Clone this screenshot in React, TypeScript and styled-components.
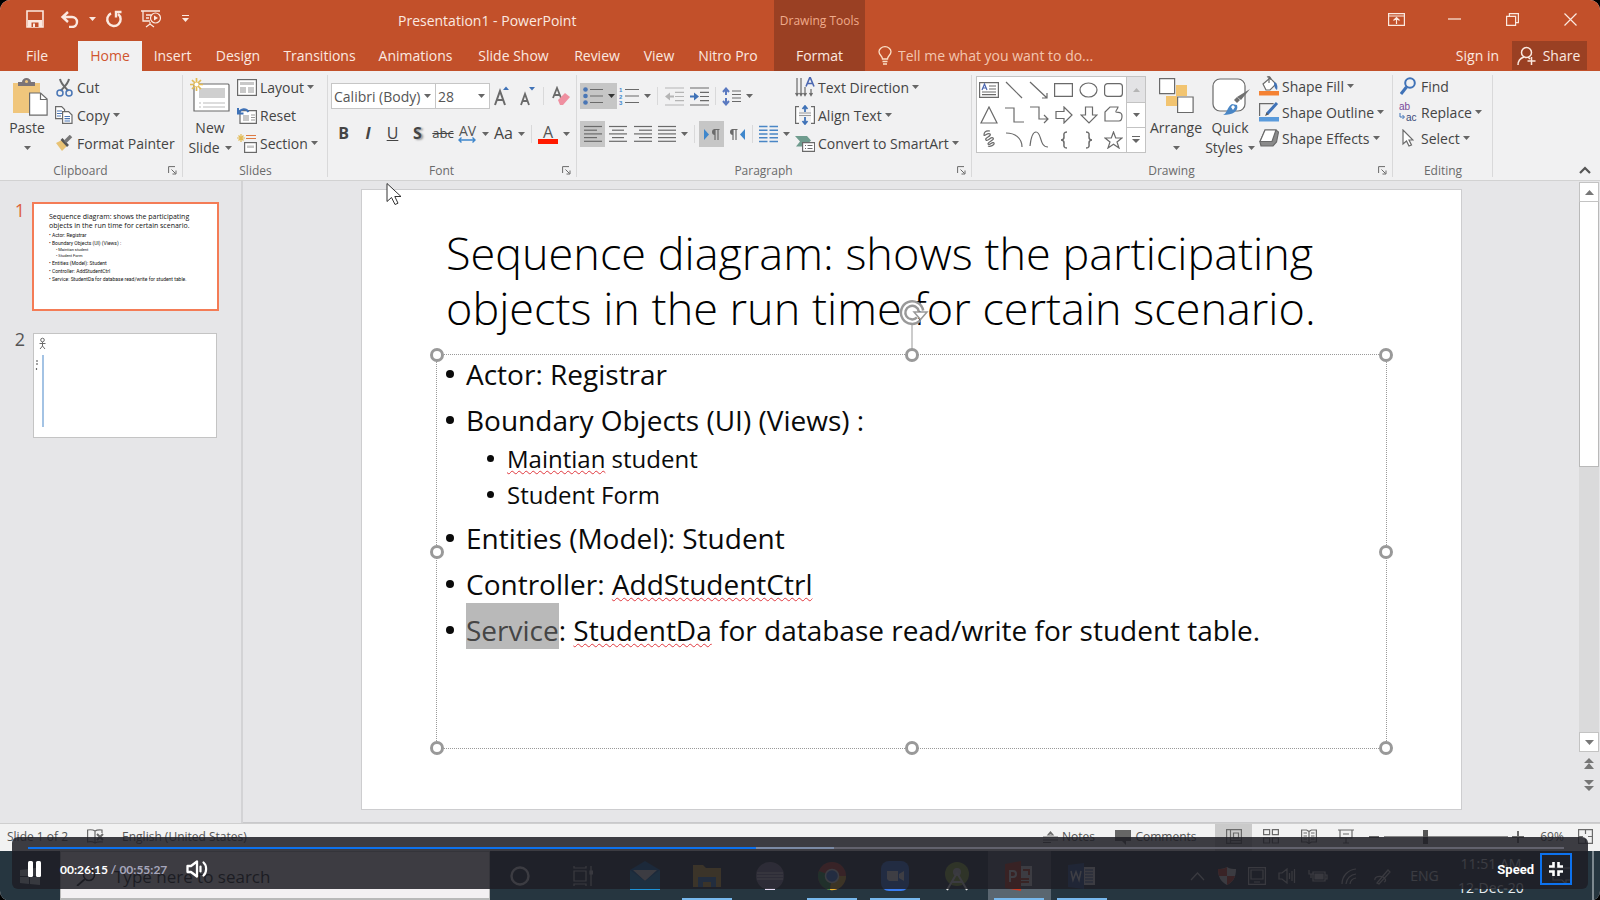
import React from "react";
import styled, { createGlobalStyle, css } from "styled-components";

const GlobalStyle = createGlobalStyle`
  *, *::before, *::after { box-sizing: border-box; }
  html, body { margin: 0; background: #000; }
  body { font-family: "Open Sans", "Noto Sans", sans-serif; font-size: 14px; color: #444; }
  button, input, select { font: inherit; color: inherit; }
  button { background: none; border: 0; padding: 0; cursor: default; }
  h1, p, ul { margin: 0; padding: 0; }
  svg { display: block; flex: none; }
`;

/* ---------- frame ---------- */

const Frame = styled.div`
  position: relative;
  display: flex;
  flex-direction: column;
  min-height: 100vh;
  overflow: hidden;
  border-radius: 10px;
  background: #e6e6e8;
`;

/* ---------- header ---------- */

const Header = styled.header`
  display: flex;
  height: 71px;
  background: #c2502a;
  color: #fbe9e0;
`;

const HeaderSide = styled.div<{ $grow?: boolean }>`
  flex: ${(p) => (p.$grow ? "1" : "none")};
  display: flex;
  flex-direction: column;
`;

const TitleRow = styled.div<{ $end?: boolean }>`
  display: flex;
  align-items: center;
  justify-content: ${(p) => (p.$end ? "flex-end" : "flex-start")};
  height: 41px;
  padding: 0 ${(p) => (p.$end ? 1 : 0)}px 3px 20px;
`;

const QuickButton = styled.button<{ $w: number }>`
  display: flex;
  align-items: center;
  justify-content: center;
  width: ${(p) => p.$w}px;
  height: 36px;
`;

const DocTitle = styled.p`
  padding-top: 3px;
  margin-left: 198px;
  white-space: nowrap;
`;

const TabRow = styled.nav`
  display: flex;
  height: 30px;
`;

const Tab = styled.button<{ $w: number; $active?: boolean }>`
  width: ${(p) => p.$w}px;
  height: 30px;
  padding-bottom: 2px;
  white-space: nowrap;
  ${(p) => p.$active && css`background: #f1f1f2; color: #d0552f;`}
`;

const MainTabs = styled(TabRow)`
  button:first-child, button:last-child { padding-right: 4px; }
`;

const Contextual = styled.div`
  flex: none;
  width: 91px;
  background: #9a4023;
`;

const ContextTitle = styled.div`
  height: 41px;
  line-height: 42px;
  text-align: center;
  font-size: 12px;
  color: #f0ab8b;
`;

const TellMe = styled.label`
  display: flex;
  align-items: center;
  flex: 1;
  gap: 6px;
  padding: 0 0 2px 13px;

  input {
    flex: 1;
    min-width: 0;
    padding: 0;
    border: 0;
    outline: 0;
    background: none;
    &::placeholder { color: #f3c6b0; opacity: 1; }
  }
`;

const SignIn = styled.button`
  padding-bottom: 2px;
  margin-right: 13px;
`;

const Share = styled.button`
  display: flex;
  align-items: center;
  justify-content: center;
  gap: 6px;
  width: 75px;
  height: 29px;
  padding-right: 2px;
  margin-right: 13px;
  background: #9a4023;
`;

/* ---------- ribbon ---------- */

const Ribbon = styled.div`
  display: flex;
  height: 110px;
  background: #f1f1f2;
  border-bottom: 1px solid #d2d2d2;
`;

const Group = styled.section<{ $w: number }>`
  flex: none;
  display: flex;
  flex-direction: column;
  width: ${(p) => p.$w}px;
  background: linear-gradient(#d9d9da, #d9d9da) right 4px / 1px 102px no-repeat;
`;

const GroupBody = styled.div<{ $left?: number }>`
  flex: 1;
  display: flex;
  align-items: flex-start;
  padding-left: ${(p) => p.$left ?? 0}px;
`;

const GroupLabel = styled.div`
  display: flex;
  align-items: center;
  height: 20px;
  font-size: 12px;
  color: #6a6a6a;

  span { flex: 1; text-align: center; }
  button { display: flex; justify-content: center; width: 22px; }
`;

const Stack = styled.div<{ $left?: number }>`
  display: flex;
  flex-direction: column;
  padding-top: 2px;
  margin-left: ${(p) => p.$left ?? 0}px;
`;

const Command = styled.button<{ $h: number; $gap?: number }>`
  display: flex;
  align-items: center;
  gap: ${(p) => p.$gap ?? 3}px;
  height: ${(p) => p.$h}px;
  white-space: nowrap;
`;

const CommandIcon = styled.span<{ $w: number }>`
  display: flex;
  justify-content: center;
  width: ${(p) => p.$w}px;
`;

const BigButton = styled.button<{ $w: number }>`
  display: flex;
  flex-direction: column;
  align-items: center;
  width: ${(p) => p.$w}px;
  padding-top: 7px;
  line-height: 20px;
  white-space: nowrap;
`;

const BigIcon = styled.span<{ $left?: number }>`
  display: flex;
  align-items: flex-start;
  height: 40px;
  padding-left: ${(p) => p.$left ?? 0}px;
`;

const BigLine = styled.span`
  display: flex;
  align-items: center;
  gap: 5px;
  height: 20px;
`;

const Rows = styled.div`
  display: flex;
  flex-direction: column;
  gap: 12px;
  padding-top: 12px;
`;

const Row = styled.div`
  display: flex;
  align-items: center;
  height: 26px;
`;

const Tool = styled.button<{ $w: number; $on?: boolean }>`
  display: flex;
  align-items: center;
  justify-content: center;
  gap: 5px;
  width: ${(p) => p.$w}px;
  height: 26px;
  ${(p) => p.$on && css`background: #c6c6c6;`}
`;

const Glyph = styled.span<{ $size?: number; $bold?: boolean; $italic?: boolean; $line?: string; $shadow?: boolean }>`
  padding-bottom: 2px;
  font-size: ${(p) => p.$size ?? 16}px;
  line-height: 22px;
  font-weight: ${(p) => (p.$bold ? 700 : 400)};
  font-style: ${(p) => (p.$italic ? "italic" : "normal")};
  text-decoration: ${(p) => p.$line ?? "none"};
  text-shadow: ${(p) => (p.$shadow ? "2px 1px 2px #999" : "none")};
`;

const Rule = styled.span<{ $before: number; $after: number }>`
  width: 1px;
  height: 18px;
  margin: 0 ${(p) => p.$after}px 0 ${(p) => p.$before}px;
  background: #d9d9da;
`;

const Combo = styled.span<{ $w: number }>`
  position: relative;
  width: ${(p) => p.$w}px;
  height: 26px;
  margin-right: -1px;

  select {
    width: 100%;
    height: 100%;
    padding: 0 0 0 2px;
    border: 1px solid #c6c6c6;
    border-radius: 0;
    background: #fff;
    appearance: none;
    color: #555;
  }
  svg { position: absolute; right: 5px; top: 11px; }
`;

const Gallery = styled.div`
  display: grid;
  grid-template-columns: 149px 19px;
  height: 77px;
  margin: 5px 0 0 4px;
  border: 1px solid #c3c3c3;
  background: #fff;
`;

const Shapes = styled.div`
  display: grid;
  grid-template-columns: repeat(6, 1fr);
  grid-auto-rows: 25px;
`;

const ShapeCell = styled.button`
  display: flex;
  align-items: center;
  justify-content: center;
`;

const GalleryScroll = styled.div`
  display: grid;
  grid-template-rows: repeat(3, 25px);
  border-left: 1px solid #c3c3c3;

  button { display: flex; align-items: center; justify-content: center; }
  button + button { border-top: 1px solid #c3c3c3; }
  button:first-child { background: #e3e3e5; }
`;

const RibbonEnd = styled.div`
  flex: 1;
  display: flex;
  align-items: flex-end;
  justify-content: flex-end;
  padding: 0 9px 6px 0;
`;

/* ---------- workspace ---------- */

const Workspace = styled.main`
  position: relative;
  flex: 1;
  display: flex;
  border-bottom: 1px solid #cfcfcf;
`;

const Thumbs = styled.aside`
  flex: none;
  width: 243px;
  padding-top: 21px;
  border-right: 2px solid #d3d3d5;
`;

const ThumbRow = styled.div`
  display: flex;
  margin-bottom: 20px;
`;

const ThumbNumber = styled.span<{ $on?: boolean }>`
  width: 32px;
  padding-right: 7px;
  text-align: right;
  font-size: 18px;
  line-height: 16px;
  color: ${(p) => (p.$on ? "#dd6139" : "#555")};
`;

const Thumb = styled.button<{ $on?: boolean }>`
  display: flex;
  flex-direction: column;
  width: ${(p) => (p.$on ? 187 : 184)}px;
  height: ${(p) => (p.$on ? 109 : 105)}px;
  margin: ${(p) => (p.$on ? 0 : "2px 1px")};
  border: ${(p) => (p.$on ? "2px solid #f47c56" : "1px solid #c4c4c4")};
  background: #fff;
  padding: ${(p) => (p.$on ? "8px 0 0 15px" : "3px 0 0 0")};
  text-align: left;
  white-space: nowrap;
  color: #111;
  overflow: hidden;
`;

const MiniTitle = styled.span`
  font-size: 7px;
  line-height: 9px;
  padding-bottom: 1px;
`;

const MiniLine = styled.span<{ $sub?: boolean }>`
  padding-left: ${(p) => (p.$sub ? 7 : 0)}px;
  font-family: Roboto, sans-serif;
  font-size: ${(p) => (p.$sub ? 4 : 5)}px;
  line-height: ${(p) => (p.$sub ? 6 : 8)}px;
`;

const Canvas = styled.div`
  flex: 1;
  min-width: 0;
  padding: 8px 117px 12px 118px;
  border-bottom: 1px solid #c9c9cb;
`;

const Slide = styled.article`
  aspect-ratio: 1101 / 621;
  padding: 35px 74px 0;
  border: 1px solid #cdcdcf;
  background: #fff;
  color: #0a0a0a;
`;

const SlideTitle = styled.h1`
  padding-left: 10px;
  font-weight: 300;
  font-size: 45px;
  line-height: 55px;
  white-space: nowrap;
  color: #000;
`;

const TextBox = styled.div`
  position: relative;
  height: 395px;
  margin-top: 19px;
  padding: 1px 0 0 9px;
  border: 1px dotted #999;
`;

const Handle = styled.span<{ $x: number; $y: number }>`
  position: absolute;
  left: ${(p) => p.$x}%;
  top: ${(p) => p.$y}%;
  width: 14px;
  height: 14px;
  margin: -7px 0 0 -7px;
  border: 3px solid #999;
  border-radius: 50%;
  background: #fff;
`;

const Rotate = styled.svg`
  position: absolute;
  left: 50%;
  top: -56px;
  margin-left: -13px;
`;

const Bullets = styled.ul`
  list-style: none;
`;

const Bullet = styled.li<{ $sub?: boolean }>`
  display: flex;
  align-items: center;
  gap: ${(p) => (p.$sub ? 13 : 12)}px;
  height: ${(p) => (p.$sub ? 31 : 36)}px;
  margin-top: ${(p) => (p.$sub ? 5 : 10)}px;
  padding-left: ${(p) => (p.$sub ? 41 : 0)}px;
  font-size: ${(p) => (p.$sub ? 24 : 28)}px;
  white-space: nowrap;

  &:first-child { margin-top: 0; }

  &::before {
    content: "";
    flex: none;
    width: ${(p) => (p.$sub ? 7 : 8)}px;
    height: ${(p) => (p.$sub ? 7 : 8)}px;
    border-radius: 50%;
    background: #0a0a0a;
  }
`;

const Misspelt = styled.span`
  text-decoration: underline wavy #e0383e 1px;
  text-decoration-skip-ink: none;
  text-underline-offset: 2px;
`;

const Marked = styled.span`
  padding-top: 8px;
  background: #b9b9b9;
  color: #454545;
`;

const ScrollBar = styled.div`
  flex: none;
  display: flex;
  flex-direction: column;
  align-items: center;
  width: 21px;
  padding: 1px 1px 26px 0;
  border-bottom: 1px solid #c9c9cb;
`;

const ArrowBox = styled.button<{ $plain?: boolean }>`
  flex: none;
  display: flex;
  align-items: center;
  justify-content: center;
  width: 20px;
  height: ${(p) => (p.$plain ? 22 : 20)}px;
  ${(p) => !p.$plain && css`border: 1px solid #c3c3c3; background: #fff;`}
`;

const Track = styled.div`
  flex: 1;
  width: 20px;
  background: #dadadb;
`;

const ThumbBar = styled.div`
  height: 50%;
  border: 1px solid #b9b9b9;
  border-top: 0;
  background: #fff;
`;

const Pointer = styled.svg`
  position: absolute;
  left: 386px;
  top: 1px;
`;

/* ---------- status bar ---------- */

const StatusBar = styled.footer`
  display: flex;
  align-items: center;
  height: 27px;
  padding: 0 6px 0 7px;
  background: #f2f2f2;
  font-size: 12px;
  color: #555;
  white-space: nowrap;
`;

const StatusText = styled.span`
  padding-bottom: 2px;
`;

const StatusEnd = styled.div`
  display: flex;
  align-items: center;
  height: 27px;
  margin-left: auto;
`;

const StatusButton = styled.button<{ $w: number; $on?: boolean; $apart?: boolean }>`
  display: flex;
  align-items: center;
  justify-content: center;
  gap: 4px;
  width: ${(p) => p.$w}px;
  height: 27px;
  padding-bottom: 2px;
  margin-right: ${(p) => (p.$apart ? 8 : 0)}px;
  ${(p) => p.$on && css`background: #cacaca;`}
`;

const ZoomRange = styled.input`
  width: 124px;
  height: 16px;
  margin: 0 0 2px;
  appearance: none;
  background: linear-gradient(#888, #888) center / 100% 1px no-repeat;
  &::-webkit-slider-thumb { appearance: none; width: 5px; height: 14px; background: #555; }
`;

/* ---------- task bar ---------- */

const TaskBar = styled.div`
  display: flex;
  height: 50px;
  background: #263640;
  color: #e8edf0;
`;

const StartButton = styled.button`
  display: flex;
  align-items: center;
  justify-content: center;
  width: 60px;
`;

const SearchBox = styled.label`
  display: flex;
  align-items: center;
  gap: 18px;
  width: 430px;
  height: 49px;
  padding: 3px 0 0 15px;
  border: 1px solid #b9b9b9;
  border-bottom-width: 2px;
  background: #f3f0f2;

  input {
    flex: 1;
    border: 0;
    padding: 0;
    background: none;
    font-size: 17px;
    &::placeholder { color: #111; opacity: 1; }
  }
`;

const Apps = styled.div`
  flex: none;
  display: grid;
  grid-template-columns: repeat(10, 1fr);
  width: 624px;
  margin-left: -1px;
`;

const AppButton = styled.button<{ $running?: boolean; $active?: boolean }>`
  display: flex;
  align-items: center;
  justify-content: center;
  background:
    ${(p) => (p.$running ? "linear-gradient(#78b9ee, #78b9ee) center bottom / 50px 3px no-repeat" : "none")}
    ${(p) => (p.$active ? ", #5a6670" : "")};
`;

const Tray = styled.div`
  display: flex;
  align-items: center;
  margin-left: auto;
  padding-right: 3px;
`;

const TrayItem = styled.button<{ $w: number }>`
  display: flex;
  align-items: center;
  justify-content: center;
  width: ${(p) => p.$w}px;
  height: 50px;
  text-align: center;
  line-height: 24px;
`;

const DesktopEdge = styled.span`
  width: 2px;
  height: 50px;
  background: #7d8990;
`;

/* ---------- video player ---------- */

const Player = styled.section`
  position: absolute;
  left: 12px;
  right: 12px;
  bottom: 12px;
  height: 52px;
  border-radius: 6px;
  background: rgba(30, 30, 37, 0.86);
  color: #fff;
`;

const Seek = styled.input`
  display: block;
  width: calc(100% - 40px);
  height: 2px;
  margin: 10px 24px 0 16px;
  appearance: none;
  background: linear-gradient(90deg, #0d72ee 47.3%, #7b8aa5 47.3%, #7b8aa5 52.5%, #62626d 52.5%);
  &::-webkit-slider-thumb { appearance: none; width: 1px; height: 2px; background: #0d72ee; }
`;

const Controls = styled.div`
  display: flex;
  align-items: center;
  height: 38px;
  padding: 2px 16px 0;
  font-family: Lato, sans-serif;
`;

const Time = styled.span<{ $dim?: boolean }>`
  font-size: 12px;
  font-weight: 700;
  color: ${(p) => (p.$dim ? "#a6a6bb" : "#fff")};
  white-space: pre;
`;

const PauseButton = styled.button`
  width: 32px;
`;

const VolumeButton = styled.button`
  margin-left: 19px;
`;

const SpeedButton = styled.button`
  margin: 0 6px 0 auto;
  font-family: Roboto, sans-serif;
  font-size: 13px;
  font-weight: 700;
`;

const FullScreen = styled.button`
  display: flex;
  align-items: center;
  justify-content: center;
  width: 32px;
  height: 32px;
  border: 2px solid #0d72ee;
`;

/* ---------- drawings ---------- */

const Caret = ({ c = "#666" }: { c?: string }) => (
  <svg width="7" height="4"><path d="M0 0h7L3.5 4z" fill={c} /></svg>
);

const Svg = ({ w, h, children, s = "#6a6a6a" }: { w: number; h: number; s?: string; children: React.ReactNode }) => (
  <svg width={w} height={h} viewBox={`0 0 ${w} ${h}`} fill="none" stroke={s} strokeWidth="1.2">{children}</svg>
);

const Launcher = () => (
  <Svg w={9} h={9}><path d="M.6 7V.6H7M3.5 3.5l4 4M8 4.5V8H4.500" strokeWidth="1" /></Svg>
);

const icons = {
  save: <Svg w={18} h={18} s="#fbe9e0"><path d="M1 1h16v16H1z" strokeWidth="1.6" /><path d="M2 10h14v7H2z" fill="#fbe9e0" stroke="none" /><path d="M5.500 12.500h7V17h-7z" fill="#c2502a" stroke="none" /><path d="M7 13.500h2V17H7z" fill="#fbe9e0" stroke="none" /></Svg>,
  undo: <Svg w={19} h={17} s="#fbe9e0"><path d="M8 1L2.500 6 8 11M2.500 6H12a5 5 0 0 1 0 10H9" strokeWidth="2.4" /></Svg>,
  redo: <Svg w={18} h={18} s="#fbe9e0"><path d="M6 3.300A6.700 6.700 0 1 0 13 4" strokeWidth="2.400" /><path d="M11 7.500V2h5.500" strokeWidth="2.400" /></Svg>,
  show: <Svg w={21} h={18} s="#fbe9e0"><path d="M0 1h19M2 1v10h7M5 5h5M5 8h3M9 12v3M5 17l4-3 4 3" strokeWidth="1.300" /><circle cx="14.500" cy="8" r="5" /><path d="M13 5.500v5l4-2.500z" fill="#fbe9e0" stroke="none" /></Svg>,
  more: <svg width="7" height="8"><path d="M0 0h7v1H0zM0 3h7L3.500 7z" fill="#fbe9e0" /></svg>,
  ribbonUp: <Svg w={17} h={13} s="#fbe9e0"><path d="M.6.6h15.800v11.800H.6zM.6 3h15.800M8.500 11V5M5.500 7.500l3-3 3 3" /></Svg>,
  min: <Svg w={13} h={2} s="#fbe9e0"><path d="M0 1h13" /></Svg>,
  restore: <Svg w={13} h={13} s="#fbe9e0"><path d="M.6 3.400h9v9h-9zM3.400 3V.6h9v9H10" /></Svg>,
  close: <Svg w={13} h={13} s="#fbe9e0"><path d="M.5.5l12 12M12.500.5l-12 12" /></Svg>,
  bulb: <Svg w={14} h={19} s="#fbe0c8"><path d="M4.500 13c0-3-3.500-4-3.500-7.300a6 5 0 0 1 12 0C13 9 9.500 10 9.500 13zM4.500 15.500h5M5 18h4" strokeWidth="1.300" /></Svg>,
  person: <Svg w={20} h={20} s="#fbe9e0"><circle cx="9.500" cy="6.500" r="5" strokeWidth="1.500" /><path d="M1 19c0-5 3-7 6-8M11 11l2 2M14.500 11v8M10.500 15h8" strokeWidth="1.500" /></Svg>,
  paste: <Svg w={36} h={38}><path d="M1 5h27v30H1z" fill="#f0c67c" stroke="none" /><path d="M6 4h4a4.500 4 0 0 1 9 0h4v4H6z" fill="#7b7477" stroke="none" /><circle cx="14.500" cy="3.500" r="1.500" fill="#f0c67c" stroke="none" /><path d="M17.600 15h11l6.500 6v16.200H17.600z" fill="#fff" /><path d="M28.500 15v6.500h6.500" /></Svg>,
  cut: <Svg w={17} h={19}><path d="M4 1c1 5 5 8 8.500 12M13 1c-1 5-5 8-8.500 12" strokeWidth="2" /><circle cx="4" cy="15" r="3" stroke="#4a76b5" strokeWidth="1.500" /><circle cx="13" cy="15" r="3" stroke="#4a76b5" strokeWidth="1.500" /></Svg>,
  copy: <Svg w={18} h={18}><path d="M.6.6h6l3 3v9h-9z" fill="#fff" /><path d="M2 5h5M2 7.500h5M2 10h4" stroke="#4a76b5" /><path d="M7.600 5.600h6l3.400 3.400v8.400H7.600z" fill="#fff" /><path d="M9.500 10.500h5.500M9.500 12.700h5.500M9.500 15h5.500" stroke="#4a76b5" /></Svg>,
  painter: <Svg w={18} h={16}><path d="M1 8l6-3 5 6-5 5z" fill="#e8c274" stroke="none" /><path d="M6.500 4l6.500 7" strokeWidth="2.600" stroke="#555" /><path d="M10 7l6-6" strokeWidth="3.500" stroke="#777" /></Svg>,
  newSlide: <Svg w={40} h={36}><path d="M4 6h34a1.500 1.500 0 0 1 1 1v26H4z" fill="#fff" /><path d="M9 10h26v10H9z" fill="#cfcfcf" stroke="none" /><path d="M9 25h2M13 25h22M9 29h2M13 29h22" stroke="#bbb" /><path d="M6.500 0v13M0 6.500h13M2 2l9 9M11 2l-9 9" stroke="#e3bb55" strokeWidth="1.700" /><circle cx="6.500" cy="6.500" r="2" fill="#fff" stroke="none" /></Svg>,
  layout: <Svg w={20} h={17}><rect x=".6" y=".6" width="18.800" height="15.800" fill="#fff" /><path d="M3 3h14v3H3zM3 8h6v6H3z" fill="#c8c8c8" stroke="none" /><path d="M11 9h6M11 11h6M11 13h6" stroke="#999" /></Svg>,
  reset: <Svg w={20} h={17}><path d="M3 3.600h16.400v12.800H3z" fill="#fff" /><path d="M6 8h6v6H6z" fill="#c8c8c8" stroke="none" /><path d="M14 8h4M14 10.500h4M14 13h4" stroke="#999" /><path d="M1 1v5.500h5.500M1.500 6C4 1.500 9 1 11.500 5" stroke="#3f72b7" strokeWidth="2" /></Svg>,
  section: <Svg w={20} h={19}><path d="M4 0v8M0 4h8M1.500 1.500l5 5M6.500 1.500l-5 5" stroke="#e3bb55" /><path d="M9 4.500h10M9 1.500h10" stroke="#dd7a42" /><rect x="7.600" y="8.600" width="11.800" height="9.800" fill="#fff" /><path d="M10 11.500h7v2.500h-7z" fill="#c8c8c8" stroke="none" /></Svg>,
  eraser: <Svg w={19} h={20}><path d="M1 12L5 2l4 10M2.500 9h5" strokeWidth="1.800" /><path d="M6 14l7-7 5 4-7 8H8z" fill="#ef8fa0" stroke="none" /></Svg>,
  bullets: <Svg w={20} h={18}><circle cx="2.500" cy="2.500" r="2.300" fill="#4a76b5" stroke="none" /><circle cx="2.500" cy="9" r="2.300" fill="#4a76b5" stroke="none" /><circle cx="2.500" cy="15.500" r="2.300" fill="#4a76b5" stroke="none" /><path d="M7 2.500h13M7 9h13M7 15.500h13" /></Svg>,
  columns: <Svg w={19} h={18}><path d="M0 1.500h8.500M0 5.200h8.500M0 9h8.500M0 12.700h8.500M0 16.500h8.500M10.500 1.500H19M10.500 5.200H19M10.500 9H19M10.500 12.700H19M10.500 16.500H19" stroke="#4a86c5" strokeWidth="1.400" /></Svg>,
  outdent: <Svg w={19} h={19} s="#b5b5b5"><path d="M0 1h19M10 5.300h9M10 9.500h9M10 13.700h9M0 18h19" /><path d="M0 9.500l5-4v3h4v2H5v3z" fill="#b5b5b5" stroke="none" /></Svg>,
  indent: <Svg w={19} h={19}><path d="M0 1h19M10 5.300h9M10 9.500h9M10 13.700h9M0 18h19" /><path d="M9 9.500l-5-4v3H0v2h4v3z" fill="#3f72b7" stroke="none" /></Svg>,
  spacing: <Svg w={19} h={19}><path d="M4 2v6M4 11v6M1 5l3-3.500L7 5M1 14l3 3.500L7 14" stroke="#5a79c0" strokeWidth="2" /><path d="M10 4h9M10 7.500h9M10 11h9M10 14.500h9" /></Svg>,
  ltr: <Svg w={16} h={13}><path d="M0 1l5 5.500L0 12z" fill="#3f87cc" stroke="none" /><path d="M11 12V1.500M14 12V1.500M15.500 1.500H10" /><path d="M11 1a3 3 0 0 0 0 6z" fill="#6a6a6a" stroke="none" /></Svg>,
  rtl: <Svg w={16} h={13}><path d="M16 1l-5 5.500 5 5.500z" fill="#3f87cc" stroke="none" /><path d="M4 12V1.500M7 12V1.500M8.500 1.500H3" /><path d="M4 1a3 3 0 0 0 0 6z" fill="#6a6a6a" stroke="none" /></Svg>,
  textDir: <Svg w={20} h={20}><path d="M2 1v17M6 1v17M10 10v8M16 12v6M.5 16L2 18.500 3.500 16M4.500 16L6 18.500 7.500 16M8.500 16l1.500 2.500 1.500-2.500M14.500 16l1.500 2.500 1.500-2.500" /><path d="M11 9.500L15 0l4 9.500M12.500 6.500h5" stroke="#4a66b0" strokeWidth="1.600" /></Svg>,
  alignText: <Svg w={20} h={20}><path d="M4 1.600H.6v16.800H4M16 1.600h3.400v16.800H16" fill="#fff" /><path d="M4 8h12M4 10.500h12" stroke="#999" /><path d="M10 1v6M10 12v7M7.500 4L10 1l2.500 3M7.500 16l2.500 3 2.500-3" stroke="#3f72b7" strokeWidth="1.800" /></Svg>,
  smartArt: <Svg w={20} h={17}><path d="M0 1h12l4 4.500-2 2H7v4H1l4-5z" fill="#6f9c8e" stroke="none" /><path d="M7.600 7.600h12v8.800h-12z" fill="#fff" /><path d="M10 10.500h1M12.500 10.500h5M10 13.500h1M12.500 13.500h5" /></Svg>,
  arrange: <Svg w={35} h={36}><path d="M17 7h11v11H17zM7 18h11v10H7z" fill="#f2c470" stroke="none" /><path d="M.6.6h15v15h-15zM18.600 19h15.500v15.500H18.600z" fill="#fff" /></Svg>,
  quick: <Svg w={39} h={38}><rect x="1" y="1" width="32" height="32" rx="7" fill="#fff" /><path d="M38 11l-9 11-4-3z" fill="#6f6f6f" stroke="none" /><path d="M28 22l-3 3-3-3 3-3z" fill="#6f6f6f" stroke="none" /><path d="M11 37c4-1 4-8 9-11l5 1c2 6-4 10-14 10z" fill="#4a86c5" stroke="none" /><path d="M19 29l2-2 2 2-2 3z" fill="#fff" stroke="none" /></Svg>,
  fill: <Svg w={20} h={20}><path d="M4 8l7-6 6 6-6 6H7z" fill="#fff" /><path d="M10 0v7M8 1c2-1 4 0 4 3" /><path d="M15 6c3 1 4 4 3 8-2-1-3-4-3-8z" fill="#3f72b7" stroke="none" /><path d="M0 15h20v4.500H0z" fill="#f58233" stroke="none" /></Svg>,
  outline: <Svg w={20} h={20}><path d="M.6 14V1.600h14" /><path d="M8 12L18 1" stroke="#3f72b7" strokeWidth="3" /><path d="M6 14l1.500-3.500 2 2z" fill="#555" stroke="none" /><path d="M0 15h20v4.500H0z" fill="#5a9bdc" stroke="none" /></Svg>,
  effects: <Svg w={20} h={18}><path d="M6 1h11l2.500 2-2 10-3.500 4H2l-1-4z" fill="#8a8a8a" /><path d="M6 1h11l-4 11.500H1z" fill="#fff" /></Svg>,
  find: <Svg w={16} h={18}><circle cx="10" cy="6" r="4.800" stroke="#3f72b7" strokeWidth="2" /><path d="M6.500 10L1 17" stroke="#3f72b7" strokeWidth="3" /></Svg>,
  select: <Svg w={12} h={18}><path d="M1 1v14l3.500-3 2.500 5 2.500-1-2.500-5h4z" fill="#fff" /></Svg>,
  chevronUp: <Svg w={12} h={8} s="#555"><path d="M1 7l5-5 5 5" strokeWidth="2.200" /></Svg>,
};

const Lines = ({ rows }: { rows: [number, number][] }) => (
  <Svg w={18} h={18}>
    {rows.map(([x, w], i) => <path key={i} d={`M${x} ${1.5 + i * 3.7}h${w}`} />)}
  </Svg>
);

const shapeIcons = [
  <Svg w={20} h={16}><path d="M.6.6h18.800v14.800H.6zM10 4h7M10 7h7M3 10h14M3 12.600h14" /><path d="M3 8l2.500-6L8 8M4 6h3" stroke="#4a66b0" /></Svg>,
  <Svg w={18} h={18}><path d="M1 1l16 16" /></Svg>,
  <Svg w={20} h={18}><path d="M1 1l17 16M18 12v5h-5" /></Svg>,
  <Svg w={19} h={14}><path d="M.6.6h17.800v12.800H.6z" /></Svg>,
  <Svg w={19} h={16}><ellipse cx="9.500" cy="8" rx="8.500" ry="7" /></Svg>,
  <Svg w={19} h={14}><rect x=".6" y=".6" width="17.800" height="12.800" rx="3" /></Svg>,
  <Svg w={18} h={18}><path d="M9 1l8 16H1z" /></Svg>,
  <Svg w={20} h={16}><path d="M1 1h9v14h10" /></Svg>,
  <Svg w={20} h={18}><path d="M1 1h9v12h9M15 9l4 4-4 4" /></Svg>,
  <Svg w={18} h={18}><path d="M1 5.500h8V1l8 8-8 8v-4.500H1z" /></Svg>,
  <Svg w={18} h={18}><path d="M5.500 1v8H1l8 8 8-8h-4.500V1z" /></Svg>,
  <Svg w={19} h={17}><path d="M6 1h8c0 2-3 4-2 5 2 1 6-1 6 4 0 4-1 5-3 5H1V6z" /></Svg>,
  <Svg w={15} h={19}><path d="M8 1C3 0 2 3 2 5s4-3 6-1-6 4-4 6 5-4 7-2-6 4-5 6 5-3 6-1-4 4-6 3" /></Svg>,
  <Svg w={19} h={16}><path d="M1 1c9 0 16 5 16 14" /></Svg>,
  <Svg w={20} h={17}><path d="M1 15C2 6 4 1 7 1c6 0 3 15 12 15" /></Svg>,
  <Svg w={10} h={18}><path d="M8 1C4 1 5 4 5 6s-1 3-3 3c2 0 3 1 3 3s-1 5 3 5" strokeWidth="1.500" /></Svg>,
  <Svg w={10} h={18}><path d="M2 1c4 0 3 3 3 5s1 3 3 3c-2 0-3 1-3 3s1 5-3 5" strokeWidth="1.500" /></Svg>,
  <Svg w={19} h={18}><path d="M9.500 1l2.200 6H18l-5 4 2 6-5.500-3.700L4 17l2-6-5-4h6.300z" /></Svg>,
];

/* ---------- data ---------- */

const tabs: [string, number][] = [
  ["File", 78], ["Home", 64], ["Insert", 61], ["Design", 70], ["Transitions", 93], ["Animations", 99],
  ["Slide Show", 97], ["Review", 70], ["View", 54], ["Nitro Pro", 88],
];

const bodyLines: { text: React.ReactNode; plain: string; sub?: boolean }[] = [
  { text: "Actor: Registrar", plain: "Actor: Registrar" },
  { text: "Boundary Objects (UI) (Views) :", plain: "Boundary Objects (UI) (Views) :" },
  { text: <><Misspelt>Maintian</Misspelt> student</>, plain: "Maintian student", sub: true },
  { text: "Student Form", plain: "Student Form", sub: true },
  { text: "Entities (Model): Student", plain: "Entities (Model): Student" },
  { text: <>Controller: <Misspelt>AddStudentCtrl</Misspelt></>, plain: "Controller: AddStudentCtrl" },
  {
    text: <><Marked>Service</Marked>: <Misspelt>StudentDa</Misspelt> for database read/write for student table.</>,
    plain: "Service: StudentDa for database read/write for student table.",
  },
];

const handles = [[0, 0], [50, 0], [100, 0], [0, 50], [100, 50], [0, 100], [50, 100], [100, 100]];

const Cmd = ({ icon, label, h = 28, w = 20, caret, gap }: {
  icon: React.ReactNode; label: string; h?: number; w?: number; caret?: boolean; gap?: number;
}) => (
  <Command $h={h} $gap={gap}>
    <CommandIcon $w={w}>{icon}</CommandIcon>
    {label}
    {caret && <Caret />}
  </Command>
);

const Label = ({ children, launcher = true }: { children: string; launcher?: boolean }) => (
  <GroupLabel>
    <span>{children}</span>
    {launcher && <button aria-label={`${children} options`}><Launcher /></button>}
  </GroupLabel>
);

const ReplaceIcon = () => (
  <svg width="18" height="22" fontFamily="Liberation Sans, sans-serif" fontSize="10">
    <text x="0" y="9" fill="#7a4a9a">ab</text>
    <text x="7" y="20" fill="#3a4a78">ac</text>
    <path d="M1 12v4h4M3.500 14l2 2-2 2" fill="none" stroke="#3f72b7" />
  </svg>
);

const NumberIcon = () => (
  <svg width="20" height="22" fontFamily="Liberation Sans, sans-serif" fontSize="6" fontWeight="700" fill="#3f87cc">
    <text x="0" y="7">1</text>
    <text x="0" y="14">2</text>
    <text x="0" y="20">3</text>
    <path d="M6 4.500h14M6 11h14M6 17.500h14" stroke="#6a6a6a" strokeWidth="1.200" />
  </svg>
);

/* ---------- sections ---------- */

const TopBar = () => (
  <Header>
    <HeaderSide>
      <TitleRow>
        <QuickButton $w={30} aria-label="Save">{icons.save}</QuickButton>
        <QuickButton $w={39} aria-label="Undo">{icons.undo}</QuickButton>
        <QuickButton $w={6} aria-label="Undo list"><Caret c="#fbe9e0" /></QuickButton>
        <QuickButton $w={38} aria-label="Redo">{icons.redo}</QuickButton>
        <QuickButton $w={37} aria-label="Start from beginning">{icons.show}</QuickButton>
        <QuickButton $w={30} aria-label="Customize toolbar">{icons.more}</QuickButton>
        <DocTitle>Presentation1 - PowerPoint</DocTitle>
      </TitleRow>
      <MainTabs>
        {tabs.map(([name, w]) => <Tab key={name} $w={w} $active={name === "Home"}>{name}</Tab>)}
      </MainTabs>
    </HeaderSide>
    <Contextual>
      <ContextTitle>Drawing Tools</ContextTitle>
      <Tab $w={91}>Format</Tab>
    </Contextual>
    <HeaderSide $grow>
      <TitleRow $end>
        <QuickButton $w={58} aria-label="Ribbon display">{icons.ribbonUp}</QuickButton>
        <QuickButton $w={58} aria-label="Minimize">{icons.min}</QuickButton>
        <QuickButton $w={58} aria-label="Restore">{icons.restore}</QuickButton>
        <QuickButton $w={58} aria-label="Close">{icons.close}</QuickButton>
      </TitleRow>
      <TabRow>
        <TellMe>
          {icons.bulb}
          <input placeholder="Tell me what you want to do..." aria-label="Tell me what you want to do" />
        </TellMe>
        <SignIn>Sign in</SignIn>
        <Share>{icons.person}Share</Share>
      </TabRow>
    </HeaderSide>
  </Header>
);

const RibbonBar = () => (
  <Ribbon>
    <Group $w={183}>
      <GroupBody>
        <BigButton $w={54}>
          <BigIcon $left={6}>{icons.paste}</BigIcon>
          <BigLine>Paste</BigLine>
          <BigLine><Caret /></BigLine>
        </BigButton>
        <Stack>
          <Cmd icon={icons.cut} label="Cut" />
          <Cmd icon={icons.copy} label="Copy" caret />
          <Cmd icon={icons.painter} label="Format Painter" />
        </Stack>
      </GroupBody>
      <Label>Clipboard</Label>
    </Group>

    <Group $w={145}>
      <GroupBody>
        <BigButton $w={54}>
          <BigIcon>{icons.newSlide}</BigIcon>
          <BigLine>New</BigLine>
          <BigLine>Slide<Caret /></BigLine>
        </BigButton>
        <Stack>
          <Cmd icon={icons.layout} label="Layout" caret />
          <Cmd icon={icons.reset} label="Reset" />
          <Cmd icon={icons.section} label="Section" caret />
        </Stack>
      </GroupBody>
      <Label launcher={false}>Slides</Label>
    </Group>

    <Group $w={249}>
      <GroupBody $left={3}>
        <Rows>
          <Row>
            <Combo $w={105}>
              <select aria-label="Font"><option>Calibri (Body)</option></select>
              <Caret />
            </Combo>
            <Combo $w={55}>
              <select aria-label="Font size"><option>28</option></select>
              <Caret />
            </Combo>
            <Tool $w={26} aria-label="Increase font size">
              <Svg w={16} h={20}><path d="M1 19L6 5l5 14M3 14h6" strokeWidth="2" /><path d="M9 4l3-3.500L15 4z" fill="#3f72b7" stroke="none" /></Svg>
            </Tool>
            <Tool $w={25} aria-label="Decrease font size">
              <Svg w={16} h={20}><path d="M1 19l4-11 4 11M2.500 15h5" strokeWidth="1.800" /><path d="M9 1l3 3.500L15 1z" fill="#3f72b7" stroke="none" /></Svg>
            </Tool>
            <Rule $before={3} $after={5} />
            <Tool $w={24} aria-label="Clear formatting">{icons.eraser}</Tool>
          </Row>
          <Row>
            <Tool $w={25} aria-label="Bold"><Glyph $bold>B</Glyph></Tool>
            <Tool $w={24} aria-label="Italic"><Glyph $italic $bold>I</Glyph></Tool>
            <Tool $w={25} aria-label="Underline"><Glyph $line="underline">U</Glyph></Tool>
            <Tool $w={25} aria-label="Shadow"><Glyph $bold $shadow>S</Glyph></Tool>
            <Tool $w={26} aria-label="Strikethrough"><Glyph $size={13} $line="line-through">abc</Glyph></Tool>
            <Tool $w={35} aria-label="Character spacing">
              <svg width="19" height="26" fontFamily="Open Sans, sans-serif" fontSize="14" fill="#555">
                <text x="1" y="15">AV</text>
                <path d="M1 19h16M3.500 16.500L1 19l2.500 2.500M14.500 16.500L17 19l-2.500 2.500" fill="none" stroke="#3f87cc" strokeWidth="1.400" />
              </svg>
              <Caret />
            </Tool>
            <Tool $w={37} aria-label="Change case"><Glyph>Aa</Glyph><Caret /></Tool>
            <Rule $before={3} $after={5} />
            <Tool $w={34} aria-label="Font color">
              <svg width="20" height="26" fontFamily="Open Sans, sans-serif" fontSize="16" fill="#555">
                <text x="5" y="17">A</text>
                <path d="M0 18h20v5H0z" fill="#ff1a00" />
              </svg>
              <Caret />
            </Tool>
          </Row>
        </Rows>
      </GroupBody>
      <Label>Font</Label>
    </Group>

    <Group $w={395}>
      <GroupBody $left={3}>
        <Rows>
          <Row>
            <Tool $w={37} $on aria-label="Bullets">{icons.bullets}<Caret c="#333" /></Tool>
            <Tool $w={36} aria-label="Numbering"><NumberIcon /><Caret /></Tool>
            <Rule $before={4} $after={4} />
            <Tool $w={25} aria-label="Decrease indent">{icons.outdent}</Tool>
            <Tool $w={25} aria-label="Increase indent">{icons.indent}</Tool>
            <Rule $before={3} $after={4} />
            <Tool $w={34} aria-label="Line spacing">{icons.spacing}<Caret /></Tool>
          </Row>
          <Row>
            <Tool $w={25} $on aria-label="Align left"><Lines rows={[[0, 18], [0, 13], [0, 18], [0, 13], [0, 18]]} /></Tool>
            <Tool $w={25} aria-label="Center"><Lines rows={[[0, 18], [3, 12], [0, 18], [3, 12], [0, 18]]} /></Tool>
            <Tool $w={25} aria-label="Align right"><Lines rows={[[0, 18], [5, 13], [0, 18], [5, 13], [0, 18]]} /></Tool>
            <Tool $w={35} aria-label="Justify"><Lines rows={[[0, 18], [0, 18], [0, 18], [0, 18], [0, 18]]} /><Caret /></Tool>
            <Rule $before={4} $after={4} />
            <Tool $w={25} $on aria-label="Left to right">{icons.ltr}</Tool>
            <Tool $w={25} aria-label="Right to left">{icons.rtl}</Tool>
            <Rule $before={3} $after={3} />
            <Tool $w={36} aria-label="Columns">{icons.columns}<Caret /></Tool>
          </Row>
        </Rows>
        <Stack $left={3}>
          <Cmd icon={icons.textDir} label="Text Direction" caret />
          <Cmd icon={icons.alignText} label="Align Text" caret />
          <Cmd icon={icons.smartArt} label="Convert to SmartArt" caret />
        </Stack>
      </GroupBody>
      <Label>Paragraph</Label>
    </Group>

    <Group $w={421}>
      <GroupBody>
        <Gallery>
          <Shapes>
            {shapeIcons.map((icon, i) => <ShapeCell key={i} aria-label={`Shape ${i + 1}`}>{icon}</ShapeCell>)}
          </Shapes>
          <GalleryScroll>
            <button aria-label="Scroll up"><svg width="7" height="4"><path d="M0 4h7L3.500 0z" fill="#b5b5b5" /></svg></button>
            <button aria-label="Scroll down"><Caret /></button>
            <button aria-label="More shapes"><svg width="8" height="8"><path d="M0 0h8v1H0zM0 3h8L4 7z" fill="#666" /></svg></button>
          </GalleryScroll>
        </Gallery>
        <BigButton $w={60}>
          <BigIcon>{icons.arrange}</BigIcon>
          <BigLine>Arrange</BigLine>
          <BigLine><Caret /></BigLine>
        </BigButton>
        <BigButton $w={48}>
          <BigIcon $left={3}>{icons.quick}</BigIcon>
          <BigLine>Quick</BigLine>
          <BigLine>Styles<Caret /></BigLine>
        </BigButton>
        <Stack $left={5}>
          <Cmd icon={icons.fill} label="Shape Fill" h={26} caret />
          <Cmd icon={icons.outline} label="Shape Outline" h={26} caret />
          <Cmd icon={icons.effects} label="Shape Effects" h={26} caret />
        </Stack>
      </GroupBody>
      <Label>Drawing</Label>
    </Group>

    <Group $w={100}>
      <GroupBody $left={5}>
        <Stack>
          <Cmd icon={icons.find} label="Find" h={26} />
          <Cmd icon={<ReplaceIcon />} label="Replace" h={26} caret />
          <Cmd icon={icons.select} label="Select" h={26} caret />
        </Stack>
      </GroupBody>
      <Label launcher={false}>Editing</Label>
    </Group>

    <RibbonEnd>
      <button aria-label="Collapse the ribbon">{icons.chevronUp}</button>
    </RibbonEnd>
  </Ribbon>
);

const Editor = () => (
  <Workspace>
    <Thumbs>
      <ThumbRow>
        <ThumbNumber $on>1</ThumbNumber>
        <Thumb $on aria-label="Slide 1">
          <MiniTitle>Sequence diagram: shows the participating<br />objects in the run time for certain scenario.</MiniTitle>
          {bodyLines.map((l) => <MiniLine key={l.plain} $sub={l.sub}>• {l.plain}</MiniLine>)}
        </Thumb>
      </ThumbRow>
      <ThumbRow>
        <ThumbNumber>2</ThumbNumber>
        <Thumb aria-label="Slide 2">
          <Svg w={16} h={100}>
            <circle cx="8.500" cy="3" r="1.800" strokeWidth="1" />
            <path d="M8.500 5v4M5.500 6.500h6M8.500 9l-2.500 3M8.500 9l2.500 3" strokeWidth="1" />
            <path d="M9 18v72" stroke="#8db4de" strokeWidth="1.600" />
            <path d="M3 23v6M2.500 31v3" strokeDasharray="2 1" />
          </Svg>
        </Thumb>
      </ThumbRow>
    </Thumbs>
    <Canvas>
      <Slide>
        <SlideTitle>Sequence diagram: shows the participating<br />objects in the run time for certain scenario.</SlideTitle>
        <TextBox>
          <Bullets>
            {bodyLines.map((l) => (
              <Bullet key={l.plain} $sub={l.sub}><span>{l.text}</span></Bullet>
            ))}
          </Bullets>
          <Rotate width="30" height="50" viewBox="0 0 30 50" fill="none">
            <path d="M13 24v26" stroke="#bbb" strokeWidth="1.500" />
            <path d="M19.500 20A9 9 0 1 1 22 12" stroke="#999" strokeWidth="7" />
            <path d="M19.500 20A9 9 0 1 1 22 12" stroke="#fff" strokeWidth="2" />
            <path d="M15 13h13l-6.500 7.500z" fill="#fff" stroke="#999" strokeWidth="1.500" />
          </Rotate>
          {handles.map(([x, y]) => <Handle key={`${x}-${y}`} $x={x} $y={y} />)}
        </TextBox>
      </Slide>
    </Canvas>
    <ScrollBar>
      <ArrowBox aria-label="Scroll up"><svg width="9" height="5"><path d="M0 5h9L4.500 0z" fill="#777" /></svg></ArrowBox>
      <Track><ThumbBar /></Track>
      <ArrowBox aria-label="Scroll down"><svg width="9" height="5"><path d="M0 0h9L4.500 5z" fill="#777" /></svg></ArrowBox>
      <ArrowBox $plain aria-label="Previous slide"><svg width="10" height="11"><path d="M0 5h10L5 0zM0 11h10L5 5z" fill="#777" /></svg></ArrowBox>
      <ArrowBox $plain aria-label="Next slide"><svg width="10" height="11"><path d="M0 0h10L5 5zM0 6h10l-5 5z" fill="#777" /></svg></ArrowBox>
    </ScrollBar>
    <Pointer width="16" height="24" viewBox="0 0 16 24">
      <path d="M1 1.500v18l4.500-4 3.500 7 3-1.300-3.200-6.700H15z" fill="#fff" stroke="#333" />
    </Pointer>
  </Workspace>
);

const Status = () => (
  <StatusBar>
    <StatusText>Slide 1 of 2</StatusText>
    <StatusButton $w={54} aria-label="Spelling">
      <Svg w={17} h={15}><path d="M8 2v12M8 2C6 .6 3 .6.6 1v12c2.400-.5 5-.4 7.400 1 2-1.400 4-1.500 8-1M8 2c2-1.400 4-1.400 7-1v3" /><path d="M10 5l6 6M16 5l-6 6" strokeWidth="2" /></Svg>
    </StatusButton>
    <StatusText>English (United States)</StatusText>
    <StatusEnd>
      <StatusButton $w={72}><Svg w={15} h={12}><path d="M5 4l2.500-3L10 4zM0 6h15M0 9h15M0 11.500h8" /></Svg>Notes</StatusButton>
      <StatusButton $w={102} $apart><svg width="16" height="16"><path d="M0 1h16v11h-5v4l-4-4H0z" fill="#666" /></svg>Comments</StatusButton>
      <StatusButton $w={37} $on aria-label="Normal view"><Svg w={16} h={15}><path d="M.6.6h14.800v13.800H.6zM4.500.6v13.800M7.500 4h5v5h-5zM4.500 11.500h11" /></Svg></StatusButton>
      <StatusButton $w={38} aria-label="Slide sorter"><Svg w={16} h={15}><path d="M.6.6h6v5h-6zM9.400.6h6v5h-6zM.6 9h6v5h-6zM9.400 9h6v5h-6z" /></Svg></StatusButton>
      <StatusButton $w={38} aria-label="Reading view"><Svg w={16} h={15}><path d="M8 2v12M.6 1h5L8 2.500 10.400 1h5v12h-5L8 14.500 5.600 13h-5zM2.500 4h3.500M2.500 7h3.500M2.500 10h3.500M10 4h3.500M10 7h3.500M10 10h3.500" /></Svg></StatusButton>
      <StatusButton $w={36} aria-label="Slide show"><Svg w={16} h={15}><path d="M0 1h16M2 1v8h12V1M5 5h6M8 9v5M5 14h6" /></Svg></StatusButton>
      <StatusButton $w={20} aria-label="Zoom out"><Svg w={10} h={2}><path d="M0 1h10" strokeWidth="2" /></Svg></StatusButton>
      <ZoomRange type="range" min={0} max={100} defaultValue={33} aria-label="Zoom" />
      <StatusButton $w={20} aria-label="Zoom in"><Svg w={12} h={12}><path d="M0 6h12M6 0v12" strokeWidth="2" /></Svg></StatusButton>
      <StatusButton $w={48}>69%</StatusButton>
      <StatusButton $w={18} aria-label="Fit slide"><Svg w={15} h={15}><path d="M.6.6h13.800v13.800H.6zM7.500 1v4M7.500 14v-4M1 7.500h4M14 7.500h-4" /></Svg></StatusButton>
    </StatusEnd>
  </StatusBar>
);

const WindowsTaskBar = () => (
  <TaskBar>
    <StartButton aria-label="Start">
      <svg width="20" height="18"><path d="M0 3l9-1v7H0zM10 2l10-2v9H10zM0 10h9v7l-9-1zM10 10h10v8l-10-1z" fill="#cfd8dd" /></svg>
    </StartButton>
    <SearchBox>
      <Svg w={20} h={18} s="#111"><circle cx="13" cy="7" r="5.500" strokeWidth="1.600" /><path d="M9 11l-8 7" strokeWidth="1.800" /></Svg>
      <input placeholder="Type here to search" aria-label="Type here to search" />
    </SearchBox>
    <Apps>
      <AppButton aria-label="Cortana"><Svg w={20} h={20} s="#eee"><circle cx="10" cy="10" r="8.500" strokeWidth="2.400" /></Svg></AppButton>
      <AppButton aria-label="Task view"><Svg w={20} h={20} s="#ddd"><path d="M1 5h12v10H1zM1 0v2h12V0M1 20v-2h12v2M18 0v20" /><path d="M17 5h3v3h-3z" fill="#ddd" /></Svg></AppButton>
      <AppButton aria-label="Mail"><svg width="30" height="30"><path d="M0 9L15 0l15 9v20H0z" fill="#1268b4" /><path d="M3 9h24L15 20z" fill="#eee" /><path d="M0 9l15 11L30 9v20H0z" fill="#1c93d8" /></svg></AppButton>
      <AppButton $running aria-label="File Explorer"><svg width="28" height="24"><path d="M0 1h10l3 3h15v19H0z" fill="#e5b53f" /><path d="M5 13h18v10h-5v-5h-8v5H5z" fill="#3b86d0" /></svg></AppButton>
      <AppButton aria-label="Eclipse"><svg width="28" height="30"><circle cx="14" cy="15" r="14" fill="#8a80a0" /><path d="M1 12h26M1 15h26M1 18h26" stroke="#fff" /><path d="M9 28h10" stroke="#e6dcf5" strokeWidth="2" /></svg></AppButton>
      <AppButton $running aria-label="Chrome"><svg width="28" height="30"><circle cx="14" cy="15" r="14" fill="#d54335" /><path d="M14 15L1 10a14 14 0 0 0 11 19z" fill="#2e9a50" /><path d="M14 15h14a14 14 0 0 1-16 14z" fill="#efb82e" /><circle cx="14" cy="15" r="6.500" fill="#3f7fe8" stroke="#eee" strokeWidth="1.500" /></svg></AppButton>
      <AppButton $running aria-label="Zoom"><svg width="28" height="30"><rect width="28" height="30" rx="8" fill="#3a7df0" /><path d="M6 10h11v10H8l-2-2zM18 13l5-3v10l-5-3z" fill="#fff" /></svg></AppButton>
      <AppButton aria-label="Android Studio"><svg width="26" height="30"><circle cx="13" cy="13" r="12" fill="#96b53a" /><circle cx="13" cy="11" r="4" fill="#ddd" /><path d="M13 12L3 29M13 12l10 17M8 21h10" stroke="#e8e8e8" strokeWidth="2" fill="none" /></svg></AppButton>
      <AppButton $running $active aria-label="PowerPoint"><svg width="28" height="30"><path d="M12 5h15v20H12z" fill="#eee" /><path d="M18 9h6v5M16 18h8M16 21h8" stroke="#d24726" fill="none" strokeWidth="2" /><path d="M0 3l16-3v30L0 27z" fill="#d23a22" /><path d="M5 21V10h3a3 3 0 0 1 0 6H5" stroke="#fff" strokeWidth="2" fill="none" /></svg></AppButton>
      <AppButton $running aria-label="Word"><svg width="28" height="26"><path d="M12 4h15v18H12z" fill="#eee" /><path d="M17 7h8M17 10h8M17 13h8M17 16h8M17 19h8" stroke="#2b579a" /><path d="M0 2l16-2v26L0 24z" fill="#2b579a" /><path d="M3 8l2 9 3-8 3 8 2-9" stroke="#fff" strokeWidth="1.500" fill="none" /></svg></AppButton>
    </Apps>
    <Tray>
      <TrayItem $w={30} aria-label="Hidden icons"><Svg w={15} h={9} s="#ddd"><path d="M1 8l6.500-7L14 8" /></Svg></TrayItem>
      <TrayItem $w={30} aria-label="Security"><svg width="18" height="18"><path d="M9 0c3 2 6 2 9 2 0 8-3 13-9 16C3 15 0 10 0 2c3 0 6 0 9-2z" fill="#e8e8e8" /><path d="M9 0C6 2 3 2 0 2c0 3 .5 5 1 7h8zM9 9h8c-1 4-4 7-8 9z" fill="#d8432f" /></svg></TrayItem>
      <TrayItem $w={30} aria-label="Display"><Svg w={18} h={18} s="#ddd"><path d="M.6.6h16.800v16.800H.6zM3 3h12v9H3zM6 15h6" /></Svg></TrayItem>
      <TrayItem $w={30} aria-label="Volume"><Svg w={18} h={16} s="#ddd"><path d="M1 5h3l5-4v14l-5-4H1zM11.500 5v6M14 3v10M16.500 1v14" /></Svg></TrayItem>
      <TrayItem $w={31} aria-label="Battery"><Svg w={20} h={14} s="#ddd"><path d="M5 3h12v9H5zM17 6h2v4h-2M1 1v4h5M3 5v4" /><path d="M7 5h8v5H7z" fill="#ddd" /></Svg></TrayItem>
      <TrayItem $w={31} aria-label="Network"><Svg w={16} h={16} s="#ddd"><path d="M1 16A15 15 0 0 1 15 1M5 16A11 11 0 0 1 15 6M9 16a7 7 0 0 1 6-6" /></Svg></TrayItem>
      <TrayItem $w={37} aria-label="Pen"><Svg w={17} h={17} s="#ddd"><path d="M3 15L14 2l2 2L5 16zM1 12c-1-4 6-4 8-3s4 4 1 5" /></Svg></TrayItem>
      <TrayItem $w={47}>ENG</TrayItem>
      <TrayItem $w={86}>11:51 AM<br />12-Dec-20</TrayItem>
      <TrayItem $w={55} aria-label="Notifications"><Svg w={20} h={18} s="#ddd"><path d="M1 1h18v12h-5v4l-4-4H1z" /></Svg></TrayItem>
      <TrayItem $w={8} aria-label="Show desktop"><DesktopEdge /></TrayItem>
    </Tray>
  </TaskBar>
);

const VideoPlayer = () => (
  <Player aria-label="Video player">
    <Seek type="range" min={0} max={3327} defaultValue={1575} aria-label="Seek" />
    <Controls>
      <PauseButton aria-label="Pause"><svg width="13" height="16"><rect width="5" height="16" rx="1.500" fill="#fff" /><rect x="8" width="5" height="16" rx="1.500" fill="#fff" /></svg></PauseButton>
      <Time>00:26:15</Time>
      <Time $dim>{" / 00:55:27"}</Time>
      <VolumeButton aria-label="Volume">
        <Svg w={22} h={18} s="#fff"><path d="M1.500 6H5l6-4.500v15L5 12H1.500z" strokeWidth="2.300" strokeLinejoin="round" /><path d="M14.500 6.500v5M17.500 2.500c3.500 3 3.500 10 0 13" strokeWidth="2.200" strokeLinecap="round" /></Svg>
      </VolumeButton>
      <SpeedButton>Speed</SpeedButton>
      <FullScreen aria-label="Exit full screen">
        <Svg w={14} h={14} s="#fff"><path d="M0 4.500h4.500V0M9.500 0v4.500H14M0 9.500h4.500V14M9.500 14V9.500H14" strokeWidth="2.600" /></Svg>
      </FullScreen>
    </Controls>
  </Player>
);

export default function App() {
  return (
    <>
      <GlobalStyle />
      <Frame>
        <TopBar />
        <RibbonBar />
        <Editor />
        <Status />
        <WindowsTaskBar />
        <VideoPlayer />
      </Frame>
    </>
  );
}
